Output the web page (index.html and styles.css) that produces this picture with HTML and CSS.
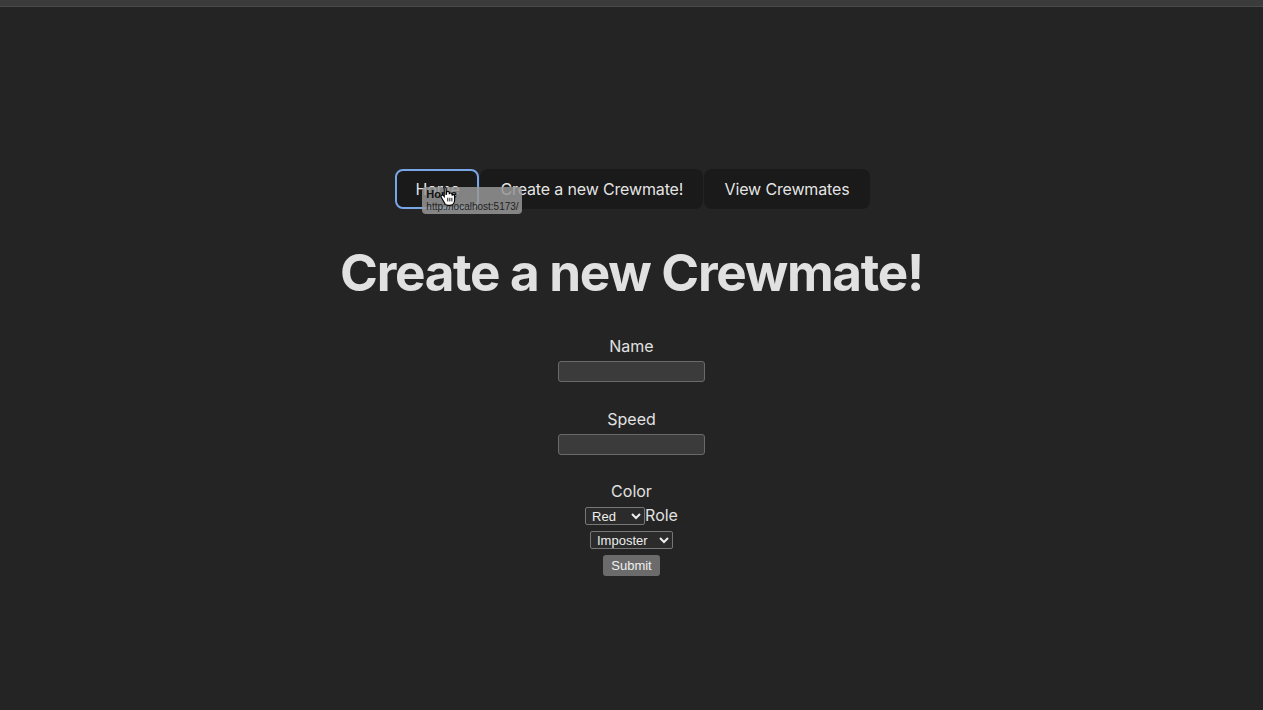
FILE: index.html
```html
<!DOCTYPE html>
<html lang="en">
<head>
<meta charset="utf-8">
<title>Crewmates</title>
<link rel="stylesheet" href="styles.css">
</head>
<body>
<div class="topbar"></div>
<main class="app">
  <nav class="nav">
    <div class="nav-item">
      <button class="btn btn-focus">Home</button>
      <div class="tooltip">
        <div class="tip-title">Home</div>
        <div class="tip-url">http://localhost:5173/</div>
        <svg class="cursor" width="16" height="21" viewBox="0 0 14 18">
          <path d="M4 1.5c.8 0 1.3.6 1.3 1.3V8l.4-.1V6.6c0-.7.6-1.2 1.2-1.2s1.2.5 1.2 1.2v1.2c.2-.6.7-1 1.2-1s1.2.5 1.2 1.2v.9c.2-.4.6-.7 1.1-.7.7 0 1.2.5 1.2 1.2v3.6c0 2.6-1.800 4.6-4.3 4.6H7.2c-1.3 0-2.3-.6-3-1.6L1.1 10.6c-.4-.6-.2-1.3.3-1.7.5-.4 1.3-.3 1.7.2l.6.8V2.8C2.7 2.1 3.2 1.5 4 1.5z" fill="#fff" stroke="#000" stroke-width="1"/>
          <path d="M6.8 11v3.2M8.6 11v3.2M10.4 11v3.2" stroke="#000" stroke-width="0.8"/>
        </svg>
      </div>
    </div>
    <button class="btn">Create a new Crewmate!</button>
    <button class="btn">View Crewmates</button>
  </nav>

  <h1 class="title">Create a new Crewmate!</h1>

  <form class="form">
    <div class="row"><label class="label" for="name">Name</label></div>
    <div class="row row-input"><input class="field" id="name" type="text"></div>
    <div class="spacer"></div>
    <div class="row"><label class="label" for="speed">Speed</label></div>
    <div class="row"><input class="field" id="speed" type="text"></div>
    <div class="spacer"></div>
    <div class="row"><label class="label" for="color">Color</label></div>
    <div class="row row-select">
      <select class="select select-color" id="color"><option>Red</option></select>
      <label class="label" for="role">Role</label>
    </div>
    <div class="row row-select">
      <select class="select select-role" id="role"><option>Imposter</option></select>
    </div>
    <div class="row row-submit">
      <button type="button" class="submit">Submit</button>
    </div>
  </form>
</main>
</body>
</html>
```

FILE: styles.css
```css
* { box-sizing: border-box; }
html, body { margin: 0; padding: 0; }
body {
  background: #242424;
  color: rgba(255, 255, 255, 0.87);
  font-family: Inter, "Noto Sans", sans-serif;
  font-size: 16px;
  line-height: 1.5;
  height: 710px;
  overflow: hidden;
}
.topbar {
  height: 7px;
  background: #3b3b3b;
  border-bottom: 1px solid #4a4a4a;
}
.app {
  display: flex;
  flex-direction: column;
  align-items: center;
  padding-top: 162px;
}
.nav {
  display: flex;
  gap: 1px;
  padding-left: 2px;
}
.nav-item { position: relative; }
.btn {
  height: 40px;
  border-radius: 8px;
  border: 1px solid transparent;
  padding: 0 19.2px;
  font-family: Inter, "Noto Sans", sans-serif;
  font-size: 16px;
  font-weight: 400;
  letter-spacing: -0.15px;
  background: #1a1a1a;
  color: rgba(255, 255, 255, 0.9);
  cursor: pointer;
}
.btn-focus {
  border: 2px solid #78a6e6;
  padding: 0 18.2px;
  width: 84px;
}
.tooltip {
  position: absolute;
  left: 27px;
  top: 18px;
  width: 100px;
  height: 27px;
  background: rgba(150, 150, 150, 0.85);
  border-radius: 4px;
  padding: 2px 4px;
  font-family: "Liberation Sans", Arial, sans-serif;
  color: #111;
  line-height: 11px;
}
.tip-title { font-size: 11px; font-weight: bold; }
.tip-url { font-size: 10px; color: #222; margin-top: 1px; }
.cursor {
  position: absolute;
  left: 18px;
  top: -2px;
}
.title {
  margin: 35px 0 34px;
  font-size: 51.2px;
  line-height: 1.1;
  font-weight: 700;
  letter-spacing: -1.3px;
  color: #e1e1e1;
}
.form {
  display: flex;
  flex-direction: column;
  align-items: center;
  width: 100%;
}
.row {
  height: 24px;
  display: flex;
  justify-content: center;
  align-items: flex-start;
}
.row-input { height: 25px; }
.spacer { height: 24px; }
.label {
  font-size: 16px;
  line-height: 24px;
  color: #e1e1e1;
}
.field {
  margin-top: 3px;
  width: 147px;
  height: 21px;
  background: #3b3b3b;
  border: 1px solid #6a6a6a;
  border-radius: 3px;
  color: #eee;
  padding: 0 4px;
}
.row-select { align-items: center; }
.select {
  height: 18px;
  background: #2b2b2b;
  border: 1px solid #767676;
  border-radius: 2px;
  color: #eee;
  font-family: "Liberation Sans", Arial, sans-serif;
  font-size: 13px;
  padding: 0 2px;
}
.select-color { width: 60px; margin-top: 2px; }
.select-role { width: 83px; margin-top: 1px; }
.row-submit { height: 26px; }
.submit {
  margin-top: 4px;
  width: 57px;
  height: 21px;
  background: #6b6b6b;
  border: none;
  border-radius: 3px;
  color: #f0f0f0;
  font-family: "Liberation Sans", Arial, sans-serif;
  font-size: 13px;
  padding: 0;
}
```
